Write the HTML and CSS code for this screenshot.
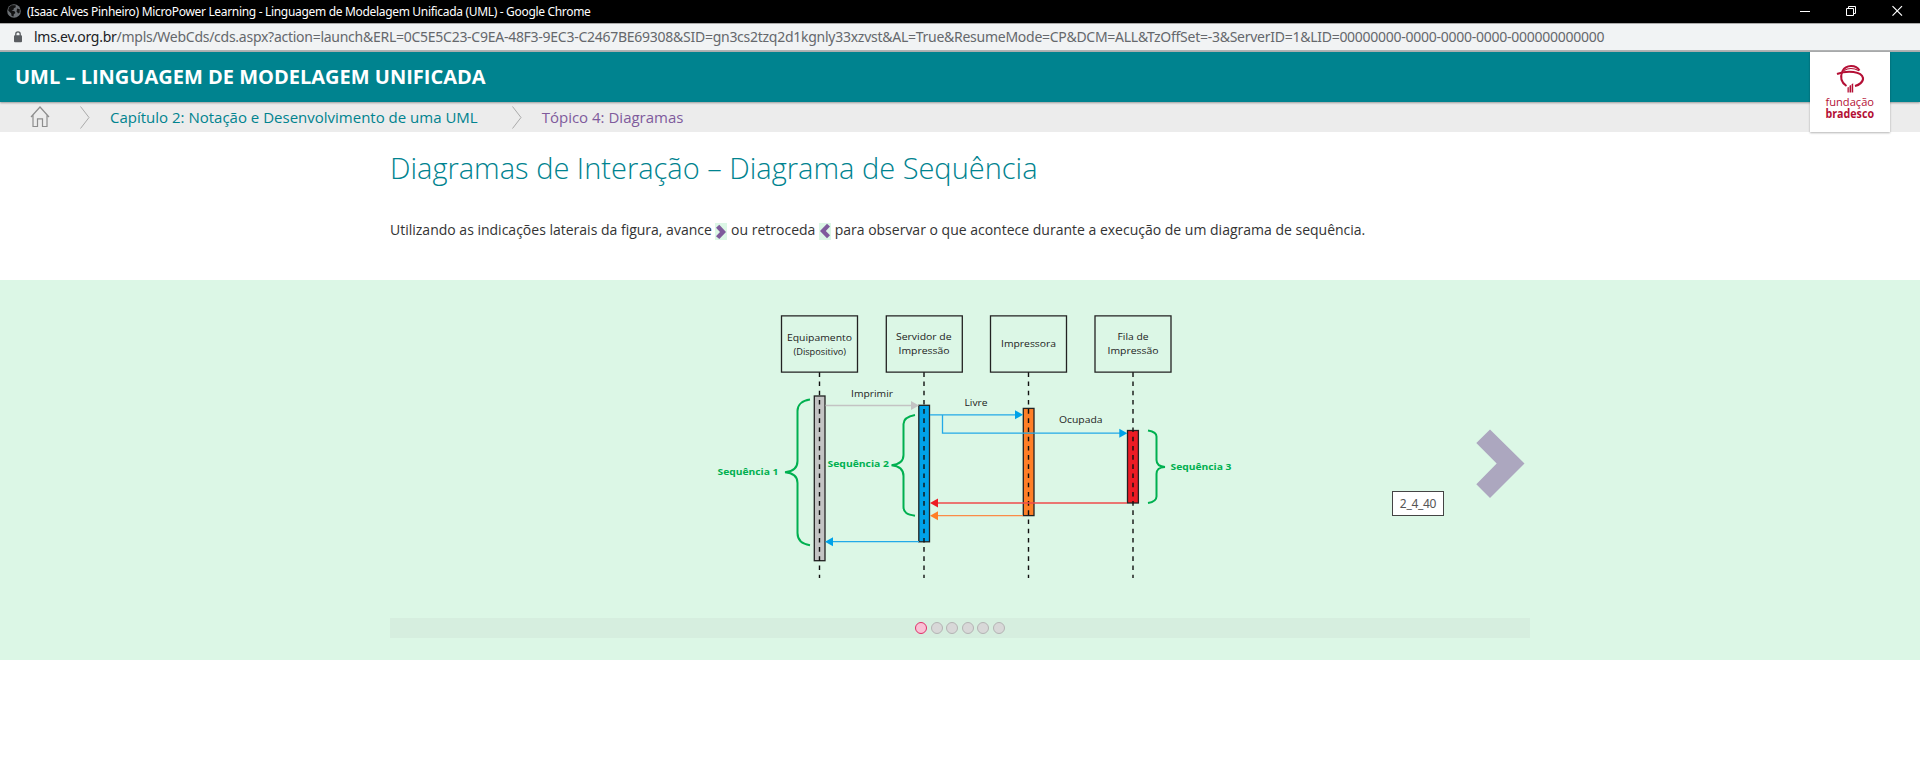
FILE: index.html
```html
<!DOCTYPE html>
<html lang="pt-BR">
<head>
<meta charset="utf-8">
<title>MicroPower Learning</title>
<link rel="stylesheet" href="styles.css">
</head>
<body>
<div class="titlebar">
  <svg class="globe" width="14" height="14" viewBox="0 0 14 14"><circle cx="7" cy="7" r="6.8" fill="#6b6f73"/><path d="M2 3.2 L4.5 1.2 L8.6 1.3 L8.8 3.2 L6.8 4.2 L6.6 5.8 L4.5 6.4 L7.6 7.2 L8.4 9 L6.8 10.3 L6.5 12.6 L4.6 12 L4.2 9.4 L1.2 6.6Z" fill="#111"/><path d="M10 4.6 L12.8 5.2 L12.6 8.8 L11 9.4 L9.7 7.2Z" fill="#111"/></svg>
  <span class="window-title">(Isaac Alves Pinheiro) MicroPower Learning - Linguagem de Modelagem Unificada (UML) - Google Chrome</span>
  <svg class="controls" width="104" height="12" viewBox="0 0 104 12" fill="none" stroke="#fff"><path d="M1 6.500H11"/><path d="M47.500 3.500h7v7h-7zM49.500 3.500v-2h7v7h-2"/><path d="M93.500 1.200L103 10.700M103 1.200L93.500 10.700" stroke-width="1.200"/></svg>
</div>
<div class="urlbar">
  <svg class="lock" width="8" height="12" viewBox="0 0 8 12"><path d="M1.800 5V3a2.200 2.200 0 0 1 4.400 0V5" fill="none" stroke="#5a5d61" stroke-width="1.300"/><rect y="4.300" width="8" height="7" rx="1" fill="#5a5d61"/></svg>
  <span class="url"><span class="host">lms.ev.org.br</span>/mpls/WebCds/cds.aspx?action=launch&amp;ERL=0C5E5C23-C9EA-48F3-9EC3-C2467BE69308&amp;SID=gn3cs2tzq2d1kgnly33xzvst&amp;AL=True&amp;ResumeMode=CP&amp;DCM=ALL&amp;TzOffSet=-3&amp;ServerID=1&amp;LID=00000000-0000-0000-0000-000000000000</span>
</div>
<header class="header">
  <h1 class="course">UML – LINGUAGEM DE MODELAGEM UNIFICADA</h1>
  <div class="logo">
    <svg width="80" height="80" viewBox="0 0 80 80">
      <g fill="none" stroke="#b40f35">
        <path d="M49.500 18.500C46 12.500 36 12.500 32.500 19C29.500 26 32 31 36.500 34" stroke-width="1.900"/>
        <path d="M27 22C38 18 51.500 19.500 53 26C53.500 30 49 33 45 34" stroke-width="2.100"/>
        <path d="M34 18.500C38 16 44 16 49 18.800" stroke-width="1.100"/>
      </g>
      <path d="M37.500 35.500l1.300-.6V40.500h-1.300zM39.500 33.800l1.500-.8v7.500h-1.500zM41.600 32.200l1.600-.9v9.200h-1.600z" fill="#b40f35"/>
      <text class="logo-text" x="15.500" y="54" textLength="48.500" lengthAdjust="spacingAndGlyphs">fundação</text>
      <text class="logo-text logo-strong" x="15.500" y="66" textLength="48.500" lengthAdjust="spacingAndGlyphs">bradesco</text>
    </svg>
  </div>
</header>
<nav class="crumbs">
  <svg class="home" width="20" height="22" viewBox="0 0 20 22" fill="none" stroke="#8d8d8d" stroke-width="1.200"><path d="M1 11L10 1L19 11M3 9.200V20.500H7.500V12.800H12.500V20.500H17V9.200"/></svg>
  <svg class="sep" width="10" height="23" viewBox="0 0 10 23" fill="none" stroke="#aaa"><path d="M.5.5L9 11.500L.5 22.500"/></svg>
  <a class="chapter">Capítulo 2: Notação e Desenvolvimento de uma UML</a>
  <svg class="sep sep-last" width="10" height="23" viewBox="0 0 10 23" fill="none" stroke="#aaa"><path d="M.5.5L9 11.500L.5 22.500"/></svg>
  <a class="topic">Tópico 4: Diagramas</a>
</nav>
<main>
  <section class="intro">
    <h2 class="heading">Diagramas de Interação – Diagrama de Sequência</h2>
    <p class="lead">Utilizando as indicações laterais da figura, avance <svg class="arrow" width="12" height="17" viewBox="0 0 12 17"><path d="M0 0H12V17H0z" fill="#dcf7e6"/><path d="M4.300 1.700L11 9L4.300 16L1 13.200L5 9L1 4.700Z" fill="#7f5b9c"/></svg> ou retroceda <svg class="arrow" width="12" height="17" viewBox="0 0 12 17"><path d="M0 0H12V17H0z" fill="#dcf7e6"/><path d="M8 .8L11 3.600L6.800 8L11 12.300L8 15.300L1 8Z" fill="#7f5b9c"/></svg> para observar o que acontece durante a execução de um diagrama de sequência.</p>
  </section>
  <section class="stage">
    <div class="slide">
      <svg class="diagram" width="550" height="290" viewBox="700 300 550 290">
        <g class="box"><path d="M781.500 315.800h76v56.400h-76zM886.300 315.800h76v56.400h-76zM990.500 315.800h76v56.400h-76zM1095 315.800h76v56.400h-76z"/></g>
        <g stroke-width="1.300" stroke="#222">
          <rect x="814.300" y="396" width="10.700" height="164.700" fill="#c3c3c3"/>
          <rect x="918.800" y="405.300" width="10.700" height="136.500" fill="#00a2e8"/>
          <rect x="1023.300" y="408.400" width="10.700" height="107.200" fill="#ff7f27"/>
          <rect x="1127.500" y="430.500" width="10.900" height="72.500" fill="#ed1c24"/>
        </g>
        <path class="life" d="M819.500 372.300V578M924 372.300V578M1028.500 372.300V578M1133 372.300V578"/>
        <g fill="none" stroke-width="1.300">
          <path d="M825.500 405.500H912" stroke="#c3c3c3"/>
          <path d="M930 414.900H1016M942.500 415V433.200H1120M919 541.700H832" stroke="#22a9e8"/>
          <path d="M1127 503H936" stroke="#ef4b4b" stroke-width="1.600"/>
          <path d="M1023 515.700H936" stroke="#fb8c48"/>
        </g>
        <path d="M911 401v9l8-4.500z" fill="#c3c3c3"/>
        <path d="M1015 410.300v9l8-4.500zM1119.300 428.700v9l8-4.500zM833 537.200v9l-8-4.500z" fill="#00a2e8"/>
        <path d="M938 498.500v9l-8-4.500z" fill="#ed1c24"/><path d="M938 511.200v9l-8-4.500z" fill="#ff7f27"/>
        <g class="brace">
          <path d="M810 399.500C802 400.500 797.500 405 797.500 411V461C797.500 467 794 471.500 785 472.300C794 473 797.500 477 797.500 483V533C797.500 540 802 544 810 545.200"/>
          <path d="M915 415C907 416.500 903.500 419 903.500 424V455C903.500 461 900 464.500 891.500 465.200C900 466 903.500 470 903.500 476V507C903.500 512.500 907 514.500 915 515.700"/>
          <path d="M1148 430.500C1153.500 431.500 1156.500 433.500 1156.500 436.500V460C1156.500 464 1158.500 466.500 1165 466.900C1158.500 467.300 1156.500 469.500 1156.500 474V496.500C1156.500 500 1153.500 502 1148 503"/>
        </g>
        <g class="label">
          <text x="787" y="341" textLength="65" lengthAdjust="spacingAndGlyphs">Equipamento</text>
          <text class="device" x="793.500" y="355" textLength="52.500" lengthAdjust="spacingAndGlyphs">(Dispositivo)</text>
          <text x="896" y="340" textLength="55.500" lengthAdjust="spacingAndGlyphs">Servidor de</text>
          <text x="898.500" y="354" textLength="51" lengthAdjust="spacingAndGlyphs">Impressão</text>
          <text x="1001" y="347" textLength="55" lengthAdjust="spacingAndGlyphs">Impressora</text>
          <text x="1117.500" y="340" textLength="31" lengthAdjust="spacingAndGlyphs">Fila de</text>
          <text x="1107.500" y="354" textLength="51" lengthAdjust="spacingAndGlyphs">Impressão</text>
          <text x="851" y="397" textLength="42" lengthAdjust="spacingAndGlyphs">Imprimir</text>
          <text x="964.500" y="406" textLength="23" lengthAdjust="spacingAndGlyphs">Livre</text>
          <text x="1059" y="423" textLength="43.500" lengthAdjust="spacingAndGlyphs">Ocupada</text>
        </g>
        <g class="label seq">
          <text x="717.500" y="475" textLength="61" lengthAdjust="spacingAndGlyphs">Sequência 1</text>
          <text x="827.500" y="467" textLength="61.500" lengthAdjust="spacingAndGlyphs">Sequência 2</text>
          <text x="1170.500" y="470" textLength="61" lengthAdjust="spacingAndGlyphs">Sequência 3</text>
        </g>
      </svg>
      <svg class="next" width="50" height="70" viewBox="0 0 50 70"><path d="M14 .5L48.500 34.500L14 69L.3 55.200L20.700 34.500L.3 14Z" fill="#aca7bf"/></svg>
      <div class="tooltip">2_4_40</div>
    </div>
    <div class="pager">
      <span class="dot dot-on"></span><span class="dot"></span><span class="dot"></span><span class="dot"></span><span class="dot"></span><span class="dot"></span>
    </div>
  </section>
</main>
</body>
</html>
```
FILE: styles.css
```css
* { box-sizing: border-box; }
body { margin: 0; background: #fff; font-family: "Open Sans", sans-serif; overflow: hidden; }
h1, h2, p { margin: 0; }
svg { display: block; flex: none; }
.titlebar { display: flex; align-items: center; height: 23px; padding: 0 17px 2px 7px; background: #000; color: #fff; }
.window-title { margin: 2px 0 0 6px; font: 12px/20px "Noto Sans", sans-serif; letter-spacing: -0.32px; white-space: nowrap; }
.controls { margin-left: auto; }
.urlbar { display: flex; align-items: center; height: 29px; padding-left: 14px; background: #f1f3f4; border-top: 1px solid #aaa; border-bottom: 2px solid #b0b2b3; }
.url { margin-left: 12px; font: 14px/24px "Noto Sans", sans-serif; letter-spacing: -0.265px; color: #65686c; white-space: nowrap; }
.host { color: #202124; }
.header { display: flex; justify-content: space-between; position: relative; z-index: 1; height: 50px; padding: 0 30px 0 15px; background: #00838f; box-shadow: 0 1px 2px rgba(0,0,0,.35); }
.course { font-size: 20px; line-height: 50px; font-weight: 700; color: #fff; white-space: nowrap; }
.logo { width: 80px; height: 80px; background: #fff; box-shadow: 0 1px 2px rgba(0,0,0,.3); }
.logo-text { font-family: "Open Sans", sans-serif; font-size: 11.500px; fill: #b40f35; }
.logo-strong { font-weight: 700; }
.crumbs { display: flex; align-items: center; height: 30px; padding-left: 30px; background: #ececec; font-size: 15px; line-height: 30px; white-space: nowrap; }
.sep { margin: 0 20px 0 30px; }
.sep-last { margin: 0 20px 0 34px; }
.chapter { color: #00838f; }
.topic { color: #7f5b9c; }
.intro { height: 148px; padding: 16px 0 0 390px; }
.heading { font-size: 29px; font-weight: 300; line-height: 40px; color: #00838f; white-space: nowrap; }
.lead { margin-top: 31px; font-size: 14px; line-height: 22px; color: #333; white-space: nowrap; }
.arrow { display: inline-block; vertical-align: -5px; }
.stage { height: 380px; background: #dcf7e6; padding: 20px 390px 0; }
.slide { position: relative; display: flex; justify-content: space-between; width: 1140px; height: 318px; padding: 0 4px 0 310px; }
.next { margin-top: 129px; }
.tooltip { position: absolute; left: 1002px; top: 191px; width: 52px; height: 25px; border: 1px solid #444; background: #fff; font: 12px/23px "Noto Sans", sans-serif; letter-spacing: -0.3px; color: #555; text-align: center; }
.pager { display: flex; justify-content: center; align-items: center; gap: 3.500px; height: 20px; background: #d6eedf; }
.dot { width: 12px; height: 12px; border: 1px solid #b4b4b4; border-radius: 50%; background: #d8d8d8; }
.dot-on { border-color: #e0306a; background: #f9c0d4; }
.box { fill: none; stroke: #222; stroke-width: 1.300; }
.life { fill: none; stroke: #111; stroke-width: 1.400; stroke-dasharray: 4.600 4.600; }
.brace { fill: none; stroke: #00b050; stroke-width: 2; }
.label { font-size: 9.500px; fill: #222; }
.device { font-size: 9px; }
.seq { font-weight: 700; fill: #00b050; }
```
